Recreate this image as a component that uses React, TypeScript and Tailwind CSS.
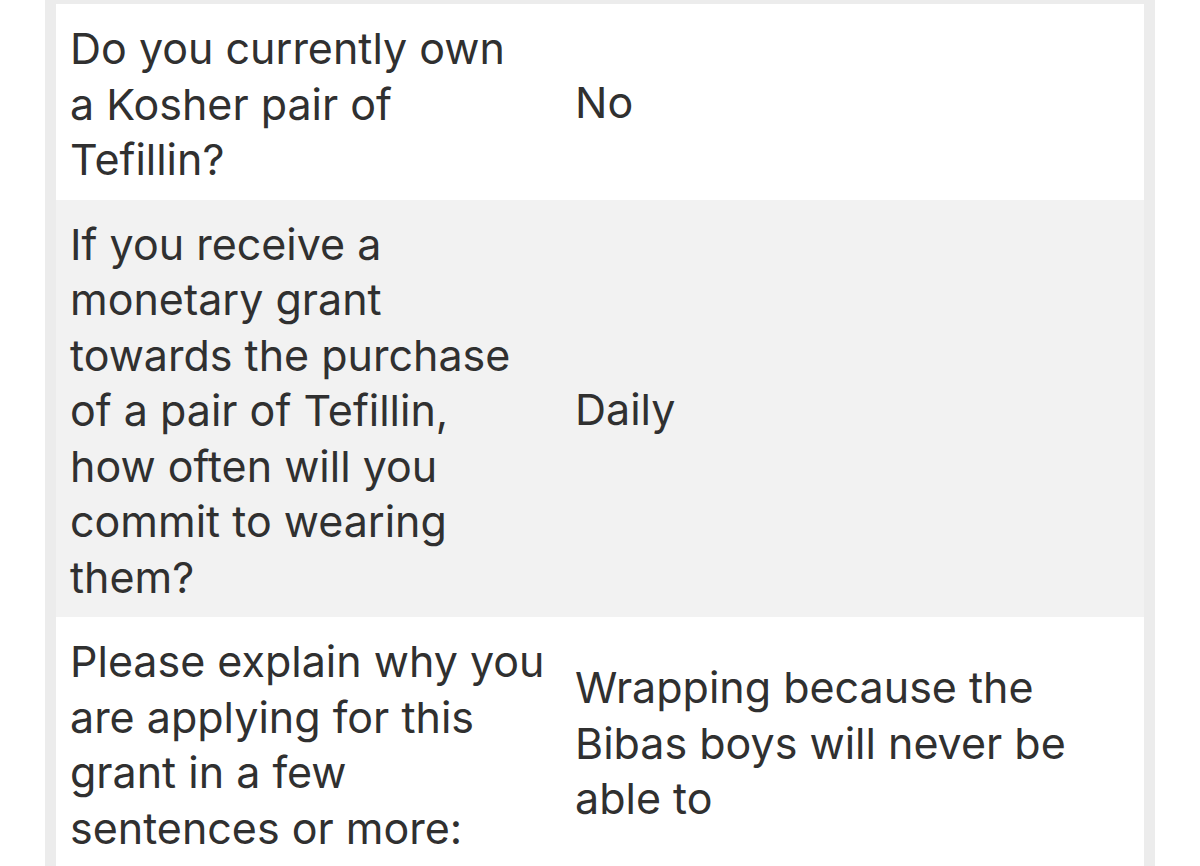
import React from "react";

type Row = {
  question: string[];
  answer: string[];
  shaded?: boolean;
};

const rows: Row[] = [
  {
    question: ["Do you currently own", "a Kosher pair of", "Tefillin?"],
    answer: ["No"],
  },
  {
    question: [
      "If you receive a",
      "monetary grant",
      "towards the purchase",
      "of a pair of Tefillin,",
      "how often will you",
      "commit to wearing",
      "them?",
    ],
    answer: ["Daily"],
    shaded: true,
  },
  {
    question: [
      "Please explain why you",
      "are applying for this",
      "grant in a few",
      "sentences or more:",
    ],
    answer: ["Wrapping because the", "Bibas boys will never be", "able to"],
  },
];

function Lines({ lines }: { lines: string[] }) {
  return (
    <>
      {lines.map((l, i) => (
        <span key={i} className="block whitespace-nowrap">
          {l}
        </span>
      ))}
    </>
  );
}

export default function App() {
  return (
    <div
      className="h-[866px] overflow-hidden bg-white text-[#303030]"
      style={{ fontFamily: "Inter, 'Liberation Sans', sans-serif" }}
    >
      <div className="ml-[45px] w-[1110px] bg-[#ececec] px-[11px] pt-[4px] h-full">
        {rows.map((row, i) => (
          <div
            key={i}
            className={`grid grid-cols-[519px_1fr] text-[43px] leading-[55.5px] ${
              row.shaded ? "bg-[#f2f2f2]" : "bg-white"
            }`}
          >
            <div className="pl-[14px] pt-[17px] pb-[12px]">
              <Lines lines={row.question} />
            </div>
            <div className="flex flex-col justify-center pt-[2px]">
              <Lines lines={row.answer} />
            </div>
          </div>
        ))}
      </div>
    </div>
  );
}
